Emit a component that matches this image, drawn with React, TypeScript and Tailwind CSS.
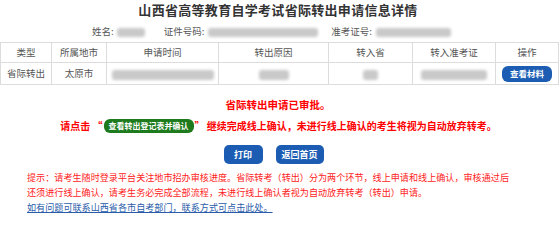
import React from "react";

const Blur = ({ w, h = 10, className = "" }: { w: number; h?: number; className?: string }) => (
  <span
    className={`inline-block align-middle rounded-[3px] bg-[#c9c9c9] blur-[1.5px] ${className}`}
    style={{ width: w, height: h }}
  />
);

export default function App() {
  const cols = [51, 55, 112, 110, 84, 83, 63];
  const headers = ["类型", "所属地市", "申请时间", "转出原因", "转入省", "转入准考证", "操作"];
  return (
    <div
      className="w-[560px] h-[222px] bg-white overflow-hidden text-[#555]"
      style={{ fontFamily: '"Noto Sans CJK SC", "Noto Sans", sans-serif' }}
    >
      <div className="pt-[1px] h-[22px] text-center text-[13px] leading-[18px] font-bold text-[#333] tracking-[0.3px] pr-[4px]">
        山西省高等教育自学考试省际转出申请信息详情
      </div>
      <div className="h-[20px] flex items-center pl-[92px] text-[9.5px] leading-none text-[#555]">
        <span>姓名:</span>
        <Blur w={28} h={9} className="ml-[3px]" />
        <span className="ml-[19px]">证件号码:</span>
        <Blur w={110} h={9} className="ml-[4px]" />
        <span className="ml-[13px]">准考证号:</span>
        <Blur w={75} h={9} className="ml-[4px]" />
      </div>
      <table className="w-[558px] table-fixed border-collapse text-[9.5px] text-[#555]">
        <colgroup>
          {cols.map((w, i) => (
            <col key={i} style={{ width: w }} />
          ))}
        </colgroup>
        <thead>
          <tr className="h-[20px]">
            {headers.map((h) => (
              <th key={h} className="border border-[#dcdcdc] font-normal text-center p-0">
                {h}
              </th>
            ))}
          </tr>
        </thead>
        <tbody>
          <tr className="h-[22px]">
            <td className="border border-[#dcdcdc] text-center p-0">省际转出</td>
            <td className="border border-[#dcdcdc] text-center p-0">太原市</td>
            <td className="border border-[#dcdcdc] text-center p-0">
              <Blur w={102} h={10} />
            </td>
            <td className="border border-[#dcdcdc] text-center p-0">
              <Blur w={30} h={10} />
            </td>
            <td className="border border-[#dcdcdc] text-center p-0">
              <Blur w={15} h={10} />
            </td>
            <td className="border border-[#dcdcdc] text-center p-0">
              <Blur w={66} h={10} />
            </td>
            <td className="border border-[#dcdcdc] text-center p-0">
              <span className="inline-flex items-center justify-center w-[50px] h-[16px] rounded-[6px] bg-[#1c5db3] text-white text-[8.5px] font-bold">
                查看材料
              </span>
            </td>
          </tr>
        </tbody>
      </table>
      <div className="mt-[13px] text-center text-[#f00] text-[10.5px] font-bold leading-[14px] pr-[4px]">
        省际转出申请已审批。
      </div>
      <div className="mt-[7px] flex items-center justify-center text-[#f00] text-[10px] font-bold leading-[14px] pr-[3px]">
        <span>请点击 “</span>
        <span className="inline-flex items-center justify-center h-[14px] px-[5px] rounded-[6px] bg-[#1d7a1d] text-white text-[8px] font-bold mx-[1px]">
          查看转出登记表并确认
        </span>
        <span>” 继续完成线上确认，未进行线上确认的考生将视为自动放弃转考。</span>
      </div>
      <div className="mt-[12px] flex justify-center gap-[13px] pr-[13px]">
        <span className="inline-flex items-center justify-center w-[39px] h-[19px] rounded-[5px] bg-[#1c5db3] text-white text-[9px] font-bold">
          打印
        </span>
        <span className="inline-flex items-center justify-center w-[48px] h-[19px] rounded-[5px] bg-[#1c5db3] text-white text-[9px] font-bold">
          返回首页
        </span>
      </div>
      <div className="mt-[6px] pl-[27px] text-[9.1px] leading-[15px] text-[#f22]">
        <div className="whitespace-nowrap">提示：请考生随时登录平台关注地市招办审核进度。省际转考（转出）分为两个环节，线上申请和线上确认，审核通过后</div>
        <div className="whitespace-nowrap">还须进行线上确认，请考生务必完成全部流程，未进行线上确认者视为自动放弃转考（转出）申请。</div>
        <div className="whitespace-nowrap text-[#2a5caa] underline">如有问题可联系山西省各市自考部门，联系方式可点击此处。</div>
      </div>
    </div>
  );
}
